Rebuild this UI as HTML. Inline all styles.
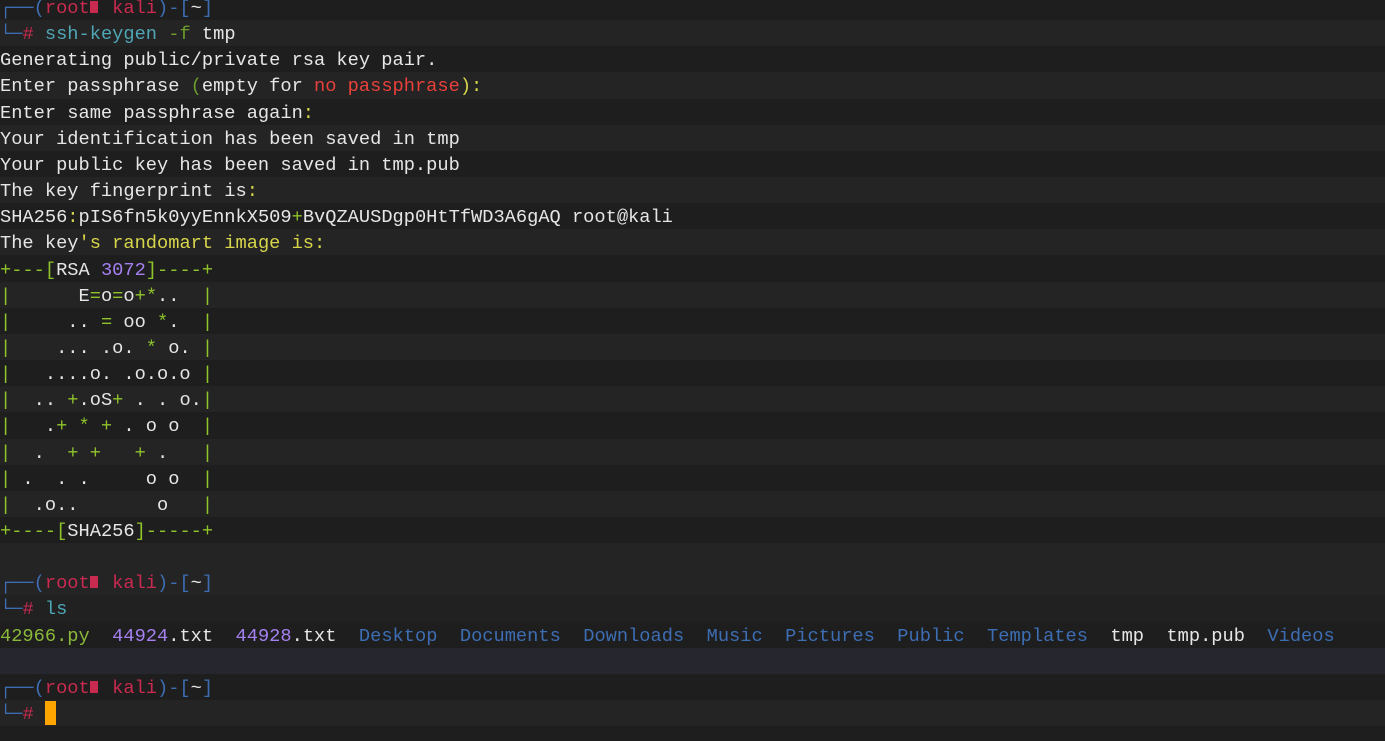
<!DOCTYPE html>
<html><head><meta charset="utf-8"><style>
html,body{margin:0;padding:0;background:#1e1e1e;width:1385px;height:741px;overflow:hidden}
.r{position:absolute;left:0;width:1385px;height:26.15px;line-height:28px;white-space:pre;font-family:"Liberation Mono",monospace;font-size:18.7px;color:#e6e6e6;overflow:hidden}
.l{background:#242424}.d{background:#1e1e1e}.h{background:#26262f}
.b{color:#3d6db3}.red{color:#c92a50}.c{color:#4fa6b6}.g{color:#6d9c2c}.y{color:#d7d54a}.n{color:#e8403a}
.a{color:#8fc42b}.p{color:#a480f0}.f{color:#8ab83a}.dir{color:#3d6db3}
.sq{display:inline-block;width:8px;height:12px;background:#c92a50;vertical-align:0px;margin-right:3.2px}
.cur{display:inline-block;width:11px;height:24px;background:#ffa500;vertical-align:-6px}
</style></head><body>
<div class="r d" style="top:-6px"><span class="b">┌──(</span><span class="red">root<span class="sq"></span> kali</span><span class="b">)-[</span>~<span class="b">]</span></div>
<div class="r l" style="top:20.15px"><span class="b">└─</span><span class="red">#</span> <span class="c">ssh-keygen</span> <span class="g">-f</span> tmp</div>
<div class="r d" style="top:46.3px">Generating public/private rsa key pair.</div>
<div class="r l" style="top:72.45px">Enter passphrase <span class="g">(</span>empty for <span class="n">no passphrase</span><span class="y">):</span></div>
<div class="r d" style="top:98.6px">Enter same passphrase again<span class="y">:</span></div>
<div class="r l" style="top:124.75px">Your identification has been saved in tmp</div>
<div class="r d" style="top:150.9px">Your public key has been saved in tmp.pub</div>
<div class="r l" style="top:177.05px">The key fingerprint is<span class="y">:</span></div>
<div class="r d" style="top:203.2px">SHA256<span class="y">:</span>pIS6fn5k0yyEnnkX509<span class="a">+</span>BvQZAUSDgp0HtTfWD3A6gAQ root@kali</div>
<div class="r l" style="top:229.35px">The key<span class="y">'s randomart image is:</span></div>
<div class="r d" style="top:255.5px"><span class="a">+---[</span>RSA <span class="p">3072</span><span class="a">]----+</span></div>
<div class="r l" style="top:281.65px"><span class="a">|</span>      E<span class="a">=</span>o<span class="a">=</span>o<span class="a">+*</span>..  <span class="a">|</span></div>
<div class="r d" style="top:307.8px"><span class="a">|</span>     .. <span class="a">=</span> oo <span class="a">*</span>.  <span class="a">|</span></div>
<div class="r l" style="top:333.95px"><span class="a">|</span>    ... .o. <span class="a">*</span> o. <span class="a">|</span></div>
<div class="r d" style="top:360.1px"><span class="a">|</span>   ....o. .o.o.o <span class="a">|</span></div>
<div class="r l" style="top:386.25px"><span class="a">|</span>  .. <span class="a">+</span>.oS<span class="a">+</span> . . o.<span class="a">|</span></div>
<div class="r d" style="top:412.4px"><span class="a">|</span>   .<span class="a">+ * +</span> . o o  <span class="a">|</span></div>
<div class="r l" style="top:438.55px"><span class="a">|</span>  .  <span class="a">+ +</span>   <span class="a">+</span> .   <span class="a">|</span></div>
<div class="r d" style="top:464.7px"><span class="a">|</span> .  . .     o o  <span class="a">|</span></div>
<div class="r l" style="top:490.85px"><span class="a">|</span>  .o..       o   <span class="a">|</span></div>
<div class="r d" style="top:517px"><span class="a">+----[</span>SHA256<span class="a">]-----+</span></div>
<div class="r l" style="top:543.15px"></div>
<div class="r d" style="top:569.3px;background:#242424"><span class="b">┌──(</span><span class="red">root<span class="sq"></span> kali</span><span class="b">)-[</span>~<span class="b">]</span></div>
<div class="r l" style="top:595.45px;background:#212121"><span class="b">└─</span><span class="red">#</span> <span class="c">ls</span></div>
<div class="r d" style="top:621.6px"><span class="f">42966.py</span>  <span class="p">44924</span>.txt  <span class="p">44928</span>.txt  <span class="dir">Desktop</span>  <span class="dir">Documents</span>  <span class="dir">Downloads</span>  <span class="dir">Music</span>  <span class="dir">Pictures</span>  <span class="dir">Public</span>  <span class="dir">Templates</span>  tmp  tmp.pub  <span class="dir">Videos</span></div>
<div class="r h" style="top:647.75px"></div>
<div class="r d" style="top:673.9px"><span class="b">┌──(</span><span class="red">root<span class="sq"></span> kali</span><span class="b">)-[</span>~<span class="b">]</span></div>
<div class="r l" style="top:700.05px"><span class="b">└─</span><span class="red">#</span> <span class="cur"></span></div>
</body></html>
